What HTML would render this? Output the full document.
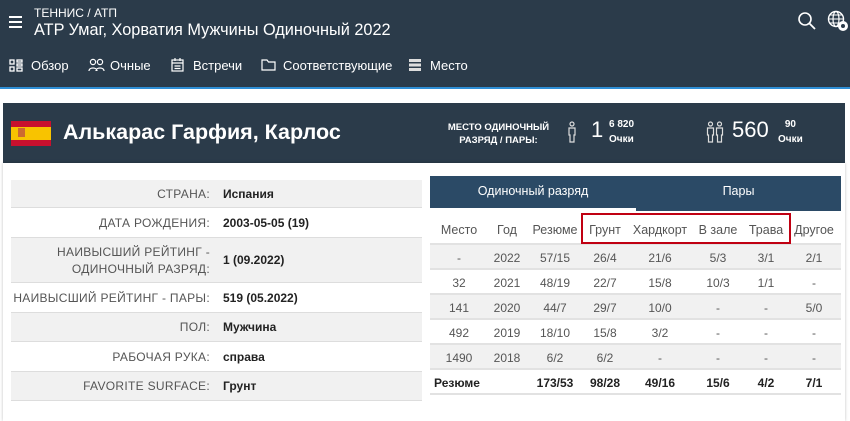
<!DOCTYPE html>
<html><head><meta charset="utf-8"><style>
*{margin:0;padding:0;box-sizing:border-box}
body{width:850px;height:421px;overflow:hidden;background:#fff;font-family:"Liberation Sans","DejaVu Sans",sans-serif;position:relative}
.hdr{position:absolute;left:0;top:0;width:850px;height:89px;background:#2b3b4a;border-bottom:2px solid #2f8fd6;color:#fff}
.abs{position:absolute}
.nav span{position:absolute;top:58px;font-size:13px;color:#fff}
.card{position:absolute;left:3px;top:103px;width:842px;height:60px;background:#2b3b4a;color:#fff}
.panel{position:absolute;left:3px;top:163px;width:842px;height:258px;background:#fff;box-shadow:0 0 3px rgba(0,0,0,.25)}
.lt{position:absolute;left:11px;width:411px;font-size:12px;color:#555;border-bottom:1px solid #ddd}
.lt .l{position:absolute;right:212px;text-align:right;letter-spacing:.3px}
.lt .v{position:absolute;left:212px;color:#222;font-weight:bold}
.g{background:#f1f1f1}
.rt{position:absolute;left:430px;width:411px;height:25px;font-size:12px;color:#555;border-bottom:2px solid #e2e2e2}
.rt span{position:absolute;top:6px;transform:translateX(-50%);white-space:nowrap}
.b span{font-weight:bold;color:#222}
</style></head><body>
<div class="hdr">
 <div class="abs" style="left:9px;top:16px;width:13px;height:2px;background:#fff;box-shadow:0 5px 0 #fff,0 10px 0 #fff"></div>
 <div class="abs" style="left:34px;top:6px;font-size:12px">ТЕННИС / АТП</div>
 <div class="abs" style="left:34px;top:21px;font-size:16.3px">ATP Умаг, Хорватия Мужчины Одиночный 2022</div>
 <svg class="abs" style="left:797px;top:11px" width="20" height="20" viewBox="0 0 20 20"><circle cx="8" cy="8" r="6" fill="none" stroke="#fff" stroke-width="1.6"/><path d="M12.5 12.5L18 18" stroke="#fff" stroke-width="1.8"/></svg>
 <svg class="abs" style="left:827px;top:10px" width="22" height="22" viewBox="0 0 22 22"><circle cx="9" cy="9" r="7.5" fill="none" stroke="#fff" stroke-width="1.4"/><ellipse cx="9" cy="9" rx="3" ry="7.5" fill="none" stroke="#fff" stroke-width="1.2"/><path d="M1.5 9h15M3 5h12M3 13h12" stroke="#fff" stroke-width="1.1"/><circle cx="16" cy="16" r="5" fill="#fff"/><circle cx="16" cy="16" r="2" fill="#2b3b4a"/></svg>
 <div class="nav">
  <svg class="abs" style="left:9px;top:59px" width="14" height="13" viewBox="0 0 14 13"><g fill="none" stroke="#fff" stroke-width="1.3"><rect x="1" y="1" width="4" height="4"/><rect x="1" y="8" width="4" height="4"/><rect x="8" y="1" width="5" height="2"/><rect x="8" y="5" width="5" height="2"/><rect x="8" y="9" width="5" height="3"/></g></svg>
  <span style="left:31px">Обзор</span>
  <svg class="abs" style="left:88px;top:58px" width="17" height="14" viewBox="0 0 17 14"><g fill="none" stroke="#fff" stroke-width="1.2"><circle cx="5" cy="4" r="2.6"/><circle cx="12" cy="4" r="2.6"/><path d="M1 13c0-4 8-4 8 0M8 13c0-4 8-4 8 0"/></g></svg>
  <span style="left:110px">Очные</span>
  <svg class="abs" style="left:171px;top:58px" width="13" height="14" viewBox="0 0 13 14"><g fill="none" stroke="#fff" stroke-width="1.2"><rect x="1" y="2" width="11" height="11"/><path d="M1 5h11M4 0v3M9 0v3M3.5 8h6M3.5 10.5h6"/></g></svg>
  <span style="left:193px">Встречи</span>
  <svg class="abs" style="left:261px;top:59px" width="15" height="12" viewBox="0 0 15 12"><path d="M1 1h5l1.5 2H14v8H1z" fill="none" stroke="#fff" stroke-width="1.2"/></svg>
  <span style="left:283px">Соответствующие</span>
  <svg class="abs" style="left:409px;top:59px" width="12" height="12" viewBox="0 0 12 12"><g fill="#ddd"><rect x="0" y="0" width="12" height="3"/><rect x="0" y="4.5" width="12" height="3"/><rect x="0" y="9" width="12" height="3"/></g></svg>
  <span style="left:430px">Место</span>
 </div>
</div>
<div class="card">
 <div class="abs" style="left:8px;top:18px;width:40px;height:25px;background:#c8102e"><div style="margin-top:6px;height:13px;background:#f8c300"></div></div>
 <div class="abs" style="left:15px;top:25px;width:7px;height:9px;background:#b44;opacity:.7"></div>
 <div class="abs" style="left:60px;top:17px;font-size:21.5px;font-weight:bold">Алькарас Гарфия, Карлос</div>
 <div class="abs" style="left:433px;top:18px;width:125px;font-size:9.5px;font-weight:bold;text-align:center;line-height:13px">МЕСТО ОДИНОЧНЫЙ<br>РАЗРЯД / ПАРЫ:</div>
 <svg class="abs" style="left:564px;top:18px" width="10" height="22" viewBox="0 0 10 22"><g fill="none" stroke="#ddd" stroke-width="1.2"><circle cx="5" cy="3" r="2"/><path d="M2 7h6v7H7v7H3v-7H2z"/></g></svg>
 <div class="abs" style="left:588px;top:14px;font-size:22px">1</div>
 <div class="abs" style="left:606px;top:14px;font-size:10px;font-weight:bold;line-height:15px">6 820<br>Очки</div>
 <svg class="abs" style="left:703px;top:18px" width="18" height="22" viewBox="0 0 18 22"><g fill="none" stroke="#ddd" stroke-width="1.2"><circle cx="4.5" cy="3" r="2"/><circle cx="13.5" cy="3" r="2"/><path d="M1.5 7h6v7h-1v7h-4v-7h-1zM10.5 7h6v7h-1v7h-4v-7h-1z"/></g></svg>
 <div class="abs" style="left:729px;top:14px;font-size:22px">560</div>
 <div class="abs" style="left:775px;top:14px;font-size:10px;font-weight:bold;line-height:15px;text-align:center">90<br>Очки</div>
</div>
<div class="panel"></div>
<div class="lt g" style="top:180px;height:28px"><span class="l" style="top:7px">СТРАНА:</span><span class="v" style="top:7px">Испания</span></div>
<div class="lt" style="top:208px;height:30px"><span class="l" style="top:8px">ДАТА РОЖДЕНИЯ:</span><span class="v" style="top:8px">2003-05-05 (19)</span></div>
<div class="lt g" style="top:238px;height:45px"><span class="l" style="top:6px;line-height:17px">НАИВЫСШИЙ РЕЙТИНГ -<br>ОДИНОЧНЫЙ РАЗРЯД:</span><span class="v" style="top:15px">1 (09.2022)</span></div>
<div class="lt" style="top:283px;height:30px"><span class="l" style="top:8px">НАИВЫСШИЙ РЕЙТИНГ - ПАРЫ:</span><span class="v" style="top:8px">519 (05.2022)</span></div>
<div class="lt g" style="top:313px;height:29px"><span class="l" style="top:7px">ПОЛ:</span><span class="v" style="top:7px">Мужчина</span></div>
<div class="lt" style="top:342px;height:30px"><span class="l" style="top:8px">РАБОЧАЯ РУКА:</span><span class="v" style="top:8px">справа</span></div>
<div class="lt g" style="top:372px;height:29px"><span class="l" style="top:7px">FAVORITE SURFACE:</span><span class="v" style="top:7px">Грунт</span></div>

<div class="abs" style="left:430px;top:176px;width:411px;height:35px;background:#2b4a66"></div>
<div class="abs" style="left:430px;top:208px;width:206px;height:3px;background:#fff"></div>
<div class="abs" style="left:430px;top:184px;width:206px;text-align:center;color:#fff;font-size:12.5px">Одиночный разряд</div>
<div class="abs" style="left:636px;top:184px;width:205px;text-align:center;color:#fff;font-size:12.5px">Пары</div>

<div class="rt" style="top:217px;height:28px;font-size:12.5px"><span style="left:29px">Место</span><span style="left:77px">Год</span><span style="left:125px">Резюме</span><span style="left:175px">Грунт</span><span style="left:230px">Хардкорт</span><span style="left:288px">В зале</span><span style="left:336px">Трава</span><span style="left:384px">Другое</span></div>
<div class="abs" style="left:581px;top:213px;width:210px;height:31px;border:2px solid #c00012"></div>
<div class="rt g" style="top:245px"><span style="left:29px">-</span><span style="left:77px">2022</span><span style="left:125px">57/15</span><span style="left:175px">26/4</span><span style="left:230px">21/6</span><span style="left:288px">5/3</span><span style="left:336px">3/1</span><span style="left:384px">2/1</span></div>
<div class="rt" style="top:270px"><span style="left:29px">32</span><span style="left:77px">2021</span><span style="left:125px">48/19</span><span style="left:175px">22/7</span><span style="left:230px">15/8</span><span style="left:288px">10/3</span><span style="left:336px">1/1</span><span style="left:384px">-</span></div>
<div class="rt g" style="top:295px"><span style="left:29px">141</span><span style="left:77px">2020</span><span style="left:125px">44/7</span><span style="left:175px">29/7</span><span style="left:230px">10/0</span><span style="left:288px">-</span><span style="left:336px">-</span><span style="left:384px">5/0</span></div>
<div class="rt" style="top:320px"><span style="left:29px">492</span><span style="left:77px">2019</span><span style="left:125px">18/10</span><span style="left:175px">15/8</span><span style="left:230px">3/2</span><span style="left:288px">-</span><span style="left:336px">-</span><span style="left:384px">-</span></div>
<div class="rt g" style="top:345px"><span style="left:29px">1490</span><span style="left:77px">2018</span><span style="left:125px">6/2</span><span style="left:175px">6/2</span><span style="left:230px">-</span><span style="left:288px">-</span><span style="left:336px">-</span><span style="left:384px">-</span></div>
<div class="rt b" style="top:370px"><span style="left:4px;transform:none">Резюме</span><span style="left:125px">173/53</span><span style="left:175px">98/28</span><span style="left:230px">49/16</span><span style="left:288px">15/6</span><span style="left:336px">4/2</span><span style="left:384px">7/1</span></div>
</body></html>
